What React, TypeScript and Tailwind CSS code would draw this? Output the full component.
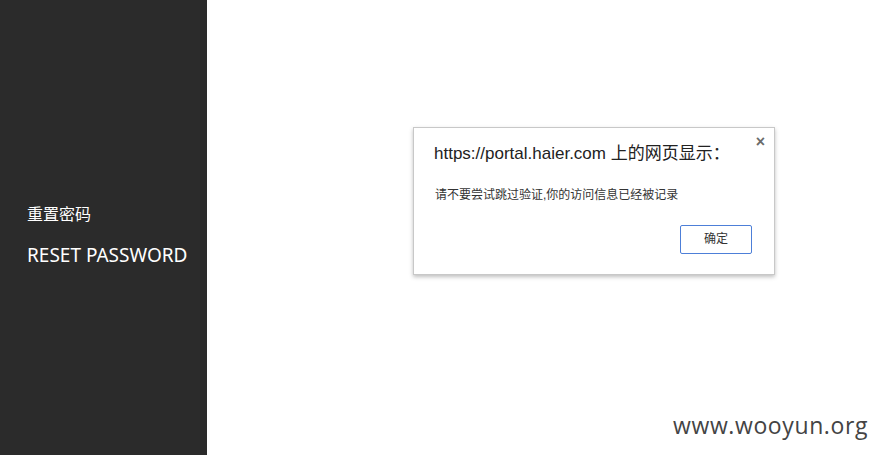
export default function App() {
  return (
    <div className="relative flex h-[455px] w-[877px] overflow-hidden bg-white" style={{ fontFamily: '"Noto Sans", "Noto Sans CJK SC", sans-serif' }}>
      {/* Sidebar */}
      <div className="flex h-full w-[207px] flex-col justify-center bg-[#2b2b2b] pl-[27px] pt-[16px] text-white">
        <div className="text-[16px] leading-[20px]">重置密码</div>
        <div className="mt-[19px] text-[19px] leading-[24px]">RESET PASSWORD</div>
      </div>

      {/* Main */}
      <div className="flex-1" />

      {/* Alert dialog */}
      <div
        className="absolute left-[413px] top-[127px] h-[148px] w-[362px] border border-[#c8c8c8] bg-white shadow-[0_2px_4px_rgba(0,0,0,0.25)]"
        style={{ fontFamily: '"Liberation Sans", "Noto Sans CJK SC", sans-serif' }}
      >
        <button className="absolute right-[9px] top-[6px] text-[16px] font-bold leading-none text-[#6b6b6b]">×</button>
        <div className="pl-[20px] pt-[13px] text-[17px] text-[#222]">https://portal.haier.com 上的网页显示：</div>
        <div className="pl-[21px] pt-[19px] text-[12px] text-[#333]">请不要尝试跳过验证,你的访问信息已经被记录</div>
        <div className="flex justify-end pr-[22px] pt-[21px]">
          <button className="h-[29px] w-[72px] rounded-[2px] border border-[#4d7fd8] bg-white text-[12px] text-[#333]">确定</button>
        </div>
      </div>

      {/* Watermark */}
      <div className="absolute bottom-[13px] right-[9px] text-[23px] tracking-[0.6px] text-[#444]" style={{ fontFamily: '"Open Sans", sans-serif' }}>
        www.wooyun.org
      </div>
    </div>
  );
}
